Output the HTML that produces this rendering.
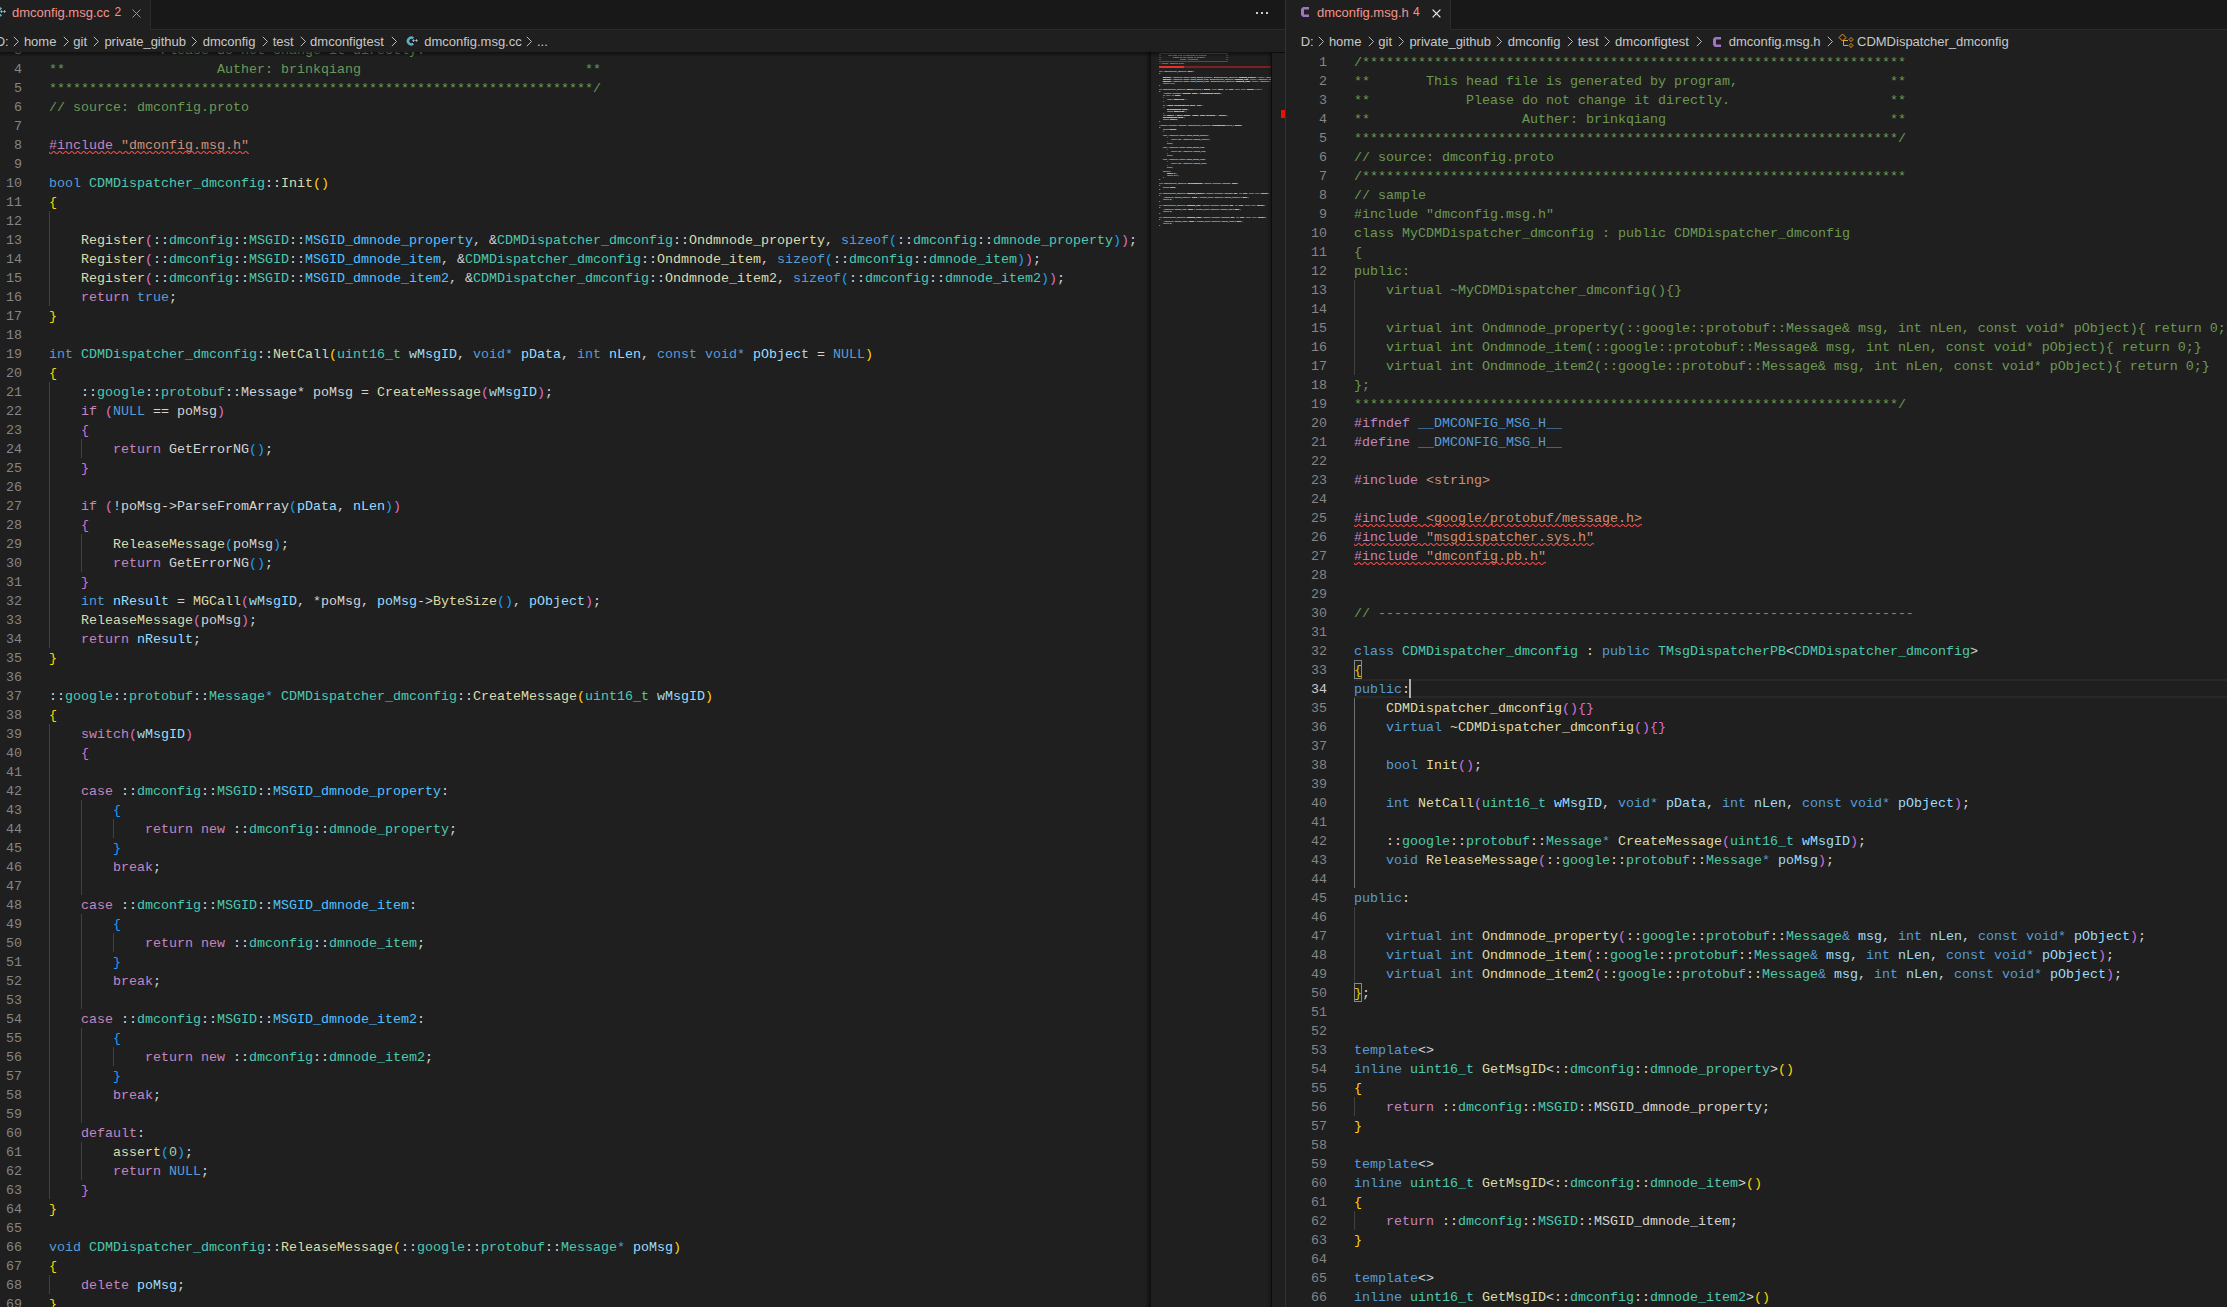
<!DOCTYPE html><html><head><meta charset="utf-8"><style>
*{margin:0;padding:0;box-sizing:border-box}
html,body{width:2227px;height:1307px;overflow:hidden;background:#1f1f1f}
body{position:relative;font-family:"Liberation Sans",sans-serif}
.cl,.ln{position:absolute;height:19px;line-height:19px;white-space:pre;font-family:"Liberation Mono",monospace;font-size:13.33px;color:#d4d4d4}
.ln{width:40px;text-align:right}
.ig{position:absolute;width:1px;height:19px}
.ui{position:absolute;white-space:pre;line-height:19px;font-family:"Liberation Sans",sans-serif}
svg{overflow:visible}
</style></head><body>
<svg width="0" height="0" style="position:absolute"><defs><pattern id="sq" patternUnits="userSpaceOnUse" width="6" height="3"><g fill="#f14c4c"><polygon points="5.5,0 2.5,3 1.1,3 4.1,0"/><polygon points="4,0 6,2 6,0.6 4.7,0"/><polygon points="0,2 1,3 2.4,3 0,0.6"/></g></pattern></defs></svg>
<div class="ln" style="top:22px;left:-18px;color:#858585">2</div>
<div class="cl" style="top:22px;left:49px"><span style="color:#6a9955">**       This head file is generated by program,                   **</span></div>
<div class="ln" style="top:41px;left:-18px;color:#858585">3</div>
<div class="cl" style="top:41px;left:49px"><span style="color:#6a9955">**            Please do not change it directly.                    **</span></div>
<div class="ln" style="top:60px;left:-18px;color:#858585">4</div>
<div class="cl" style="top:60px;left:49px"><span style="color:#6a9955">**                   Auther: brinkqiang                            **</span></div>
<div class="ln" style="top:79px;left:-18px;color:#858585">5</div>
<div class="cl" style="top:79px;left:49px"><span style="color:#6a9955">********************************************************************/</span></div>
<div class="ln" style="top:98px;left:-18px;color:#858585">6</div>
<div class="cl" style="top:98px;left:49px"><span style="color:#6a9955">// source: dmconfig.proto</span></div>
<div class="ln" style="top:117px;left:-18px;color:#858585">7</div>
<div class="ln" style="top:136px;left:-18px;color:#858585">8</div>
<div class="cl" style="top:136px;left:49px"><span style="color:#c586c0">#include</span> <span style="color:#ce9178">&quot;dmconfig.msg.h&quot;</span></div>
<div class="ln" style="top:155px;left:-18px;color:#858585">9</div>
<div class="ln" style="top:174px;left:-18px;color:#858585">10</div>
<div class="cl" style="top:174px;left:49px"><span style="color:#569cd6">bool</span> <span style="color:#4ec9b0">CDMDispatcher_dmconfig</span>::<span style="color:#dcdcaa">Init</span><span style="color:#ffd700">()</span></div>
<div class="ln" style="top:193px;left:-18px;color:#858585">11</div>
<div class="cl" style="top:193px;left:49px"><span style="color:#ffd700">{</span></div>
<div class="ln" style="top:212px;left:-18px;color:#858585">12</div>
<div class="ig" style="top:211px;left:49px;background:#404040"></div>
<div class="ln" style="top:231px;left:-18px;color:#858585">13</div>
<div class="ig" style="top:230px;left:49px;background:#404040"></div>
<div class="cl" style="top:231px;left:49px">    <span style="color:#dcdcaa">Register</span><span style="color:#da70d6">(</span>::<span style="color:#4ec9b0">dmconfig</span>::<span style="color:#4ec9b0">MSGID</span>::<span style="color:#4fc1ff">MSGID_dmnode_property</span>, &amp;<span style="color:#4ec9b0">CDMDispatcher_dmconfig</span>::<span style="color:#dcdcaa">Ondmnode_property</span>, <span style="color:#569cd6">sizeof</span><span style="color:#179fff">(</span>::<span style="color:#4ec9b0">dmconfig</span>::<span style="color:#4ec9b0">dmnode_property</span><span style="color:#179fff">)</span><span style="color:#da70d6">)</span>;</div>
<div class="ln" style="top:250px;left:-18px;color:#858585">14</div>
<div class="ig" style="top:249px;left:49px;background:#404040"></div>
<div class="cl" style="top:250px;left:49px">    <span style="color:#dcdcaa">Register</span><span style="color:#da70d6">(</span>::<span style="color:#4ec9b0">dmconfig</span>::<span style="color:#4ec9b0">MSGID</span>::<span style="color:#4fc1ff">MSGID_dmnode_item</span>, &amp;<span style="color:#4ec9b0">CDMDispatcher_dmconfig</span>::<span style="color:#dcdcaa">Ondmnode_item</span>, <span style="color:#569cd6">sizeof</span><span style="color:#179fff">(</span>::<span style="color:#4ec9b0">dmconfig</span>::<span style="color:#4ec9b0">dmnode_item</span><span style="color:#179fff">)</span><span style="color:#da70d6">)</span>;</div>
<div class="ln" style="top:269px;left:-18px;color:#858585">15</div>
<div class="ig" style="top:268px;left:49px;background:#404040"></div>
<div class="cl" style="top:269px;left:49px">    <span style="color:#dcdcaa">Register</span><span style="color:#da70d6">(</span>::<span style="color:#4ec9b0">dmconfig</span>::<span style="color:#4ec9b0">MSGID</span>::<span style="color:#4fc1ff">MSGID_dmnode_item2</span>, &amp;<span style="color:#4ec9b0">CDMDispatcher_dmconfig</span>::<span style="color:#dcdcaa">Ondmnode_item2</span>, <span style="color:#569cd6">sizeof</span><span style="color:#179fff">(</span>::<span style="color:#4ec9b0">dmconfig</span>::<span style="color:#4ec9b0">dmnode_item2</span><span style="color:#179fff">)</span><span style="color:#da70d6">)</span>;</div>
<div class="ln" style="top:288px;left:-18px;color:#858585">16</div>
<div class="ig" style="top:287px;left:49px;background:#404040"></div>
<div class="cl" style="top:288px;left:49px">    <span style="color:#c586c0">return</span> <span style="color:#569cd6">true</span>;</div>
<div class="ln" style="top:307px;left:-18px;color:#858585">17</div>
<div class="cl" style="top:307px;left:49px"><span style="color:#ffd700">}</span></div>
<div class="ln" style="top:326px;left:-18px;color:#858585">18</div>
<div class="ln" style="top:345px;left:-18px;color:#858585">19</div>
<div class="cl" style="top:345px;left:49px"><span style="color:#569cd6">int</span> <span style="color:#4ec9b0">CDMDispatcher_dmconfig</span>::<span style="color:#dcdcaa">NetCall</span><span style="color:#ffd700">(</span><span style="color:#4ec9b0">uint16_t</span> <span style="color:#9cdcfe">wMsgID</span>, <span style="color:#569cd6">void*</span> <span style="color:#9cdcfe">pData</span>, <span style="color:#569cd6">int</span> <span style="color:#9cdcfe">nLen</span>, <span style="color:#569cd6">const</span> <span style="color:#569cd6">void*</span> <span style="color:#9cdcfe">pObject</span> = <span style="color:#569cd6">NULL</span><span style="color:#ffd700">)</span></div>
<div class="ln" style="top:364px;left:-18px;color:#858585">20</div>
<div class="cl" style="top:364px;left:49px"><span style="color:#ffd700">{</span></div>
<div class="ln" style="top:383px;left:-18px;color:#858585">21</div>
<div class="ig" style="top:382px;left:49px;background:#404040"></div>
<div class="cl" style="top:383px;left:49px">    ::<span style="color:#4ec9b0">google</span>::<span style="color:#4ec9b0">protobuf</span>::Message* poMsg = <span style="color:#dcdcaa">CreateMessage</span><span style="color:#da70d6">(</span><span style="color:#9cdcfe">wMsgID</span><span style="color:#da70d6">)</span>;</div>
<div class="ln" style="top:402px;left:-18px;color:#858585">22</div>
<div class="ig" style="top:401px;left:49px;background:#404040"></div>
<div class="cl" style="top:402px;left:49px">    <span style="color:#c586c0">if</span> <span style="color:#da70d6">(</span><span style="color:#569cd6">NULL</span> == poMsg<span style="color:#da70d6">)</span></div>
<div class="ln" style="top:421px;left:-18px;color:#858585">23</div>
<div class="ig" style="top:420px;left:49px;background:#404040"></div>
<div class="cl" style="top:421px;left:49px">    <span style="color:#da70d6">{</span></div>
<div class="ln" style="top:440px;left:-18px;color:#858585">24</div>
<div class="ig" style="top:439px;left:49px;background:#404040"></div>
<div class="ig" style="top:439px;left:81px;background:#404040"></div>
<div class="cl" style="top:440px;left:49px">        <span style="color:#c586c0">return</span> GetErrorNG<span style="color:#179fff">()</span>;</div>
<div class="ln" style="top:459px;left:-18px;color:#858585">25</div>
<div class="ig" style="top:458px;left:49px;background:#404040"></div>
<div class="cl" style="top:459px;left:49px">    <span style="color:#da70d6">}</span></div>
<div class="ln" style="top:478px;left:-18px;color:#858585">26</div>
<div class="ig" style="top:477px;left:49px;background:#404040"></div>
<div class="ln" style="top:497px;left:-18px;color:#858585">27</div>
<div class="ig" style="top:496px;left:49px;background:#404040"></div>
<div class="cl" style="top:497px;left:49px">    <span style="color:#c586c0">if</span> <span style="color:#da70d6">(</span>!poMsg-&gt;ParseFromArray<span style="color:#179fff">(</span><span style="color:#9cdcfe">pData</span>, <span style="color:#9cdcfe">nLen</span><span style="color:#179fff">)</span><span style="color:#da70d6">)</span></div>
<div class="ln" style="top:516px;left:-18px;color:#858585">28</div>
<div class="ig" style="top:515px;left:49px;background:#404040"></div>
<div class="cl" style="top:516px;left:49px">    <span style="color:#da70d6">{</span></div>
<div class="ln" style="top:535px;left:-18px;color:#858585">29</div>
<div class="ig" style="top:534px;left:49px;background:#404040"></div>
<div class="ig" style="top:534px;left:81px;background:#404040"></div>
<div class="cl" style="top:535px;left:49px">        <span style="color:#dcdcaa">ReleaseMessage</span><span style="color:#179fff">(</span>poMsg<span style="color:#179fff">)</span>;</div>
<div class="ln" style="top:554px;left:-18px;color:#858585">30</div>
<div class="ig" style="top:553px;left:49px;background:#404040"></div>
<div class="ig" style="top:553px;left:81px;background:#404040"></div>
<div class="cl" style="top:554px;left:49px">        <span style="color:#c586c0">return</span> GetErrorNG<span style="color:#179fff">()</span>;</div>
<div class="ln" style="top:573px;left:-18px;color:#858585">31</div>
<div class="ig" style="top:572px;left:49px;background:#404040"></div>
<div class="cl" style="top:573px;left:49px">    <span style="color:#da70d6">}</span></div>
<div class="ln" style="top:592px;left:-18px;color:#858585">32</div>
<div class="ig" style="top:591px;left:49px;background:#404040"></div>
<div class="cl" style="top:592px;left:49px">    <span style="color:#569cd6">int</span> <span style="color:#9cdcfe">nResult</span> = <span style="color:#dcdcaa">MGCall</span><span style="color:#da70d6">(</span><span style="color:#9cdcfe">wMsgID</span>, *poMsg, <span style="color:#9cdcfe">poMsg</span>-&gt;<span style="color:#dcdcaa">ByteSize</span><span style="color:#179fff">()</span>, <span style="color:#9cdcfe">pObject</span><span style="color:#da70d6">)</span>;</div>
<div class="ln" style="top:611px;left:-18px;color:#858585">33</div>
<div class="ig" style="top:610px;left:49px;background:#404040"></div>
<div class="cl" style="top:611px;left:49px">    <span style="color:#dcdcaa">ReleaseMessage</span><span style="color:#da70d6">(</span>poMsg<span style="color:#da70d6">)</span>;</div>
<div class="ln" style="top:630px;left:-18px;color:#858585">34</div>
<div class="ig" style="top:629px;left:49px;background:#404040"></div>
<div class="cl" style="top:630px;left:49px">    <span style="color:#c586c0">return</span> <span style="color:#9cdcfe">nResult</span>;</div>
<div class="ln" style="top:649px;left:-18px;color:#858585">35</div>
<div class="cl" style="top:649px;left:49px"><span style="color:#ffd700">}</span></div>
<div class="ln" style="top:668px;left:-18px;color:#858585">36</div>
<div class="ln" style="top:687px;left:-18px;color:#858585">37</div>
<div class="cl" style="top:687px;left:49px">::<span style="color:#4ec9b0">google</span>::<span style="color:#4ec9b0">protobuf</span>::<span style="color:#4ec9b0">Message</span><span style="color:#569cd6">*</span> <span style="color:#4ec9b0">CDMDispatcher_dmconfig</span>::<span style="color:#dcdcaa">CreateMessage</span><span style="color:#ffd700">(</span><span style="color:#4ec9b0">uint16_t</span> <span style="color:#9cdcfe">wMsgID</span><span style="color:#ffd700">)</span></div>
<div class="ln" style="top:706px;left:-18px;color:#858585">38</div>
<div class="cl" style="top:706px;left:49px"><span style="color:#ffd700">{</span></div>
<div class="ln" style="top:725px;left:-18px;color:#858585">39</div>
<div class="ig" style="top:724px;left:49px;background:#404040"></div>
<div class="cl" style="top:725px;left:49px">    <span style="color:#c586c0">switch</span><span style="color:#da70d6">(</span><span style="color:#9cdcfe">wMsgID</span><span style="color:#da70d6">)</span></div>
<div class="ln" style="top:744px;left:-18px;color:#858585">40</div>
<div class="ig" style="top:743px;left:49px;background:#404040"></div>
<div class="cl" style="top:744px;left:49px">    <span style="color:#da70d6">{</span></div>
<div class="ln" style="top:763px;left:-18px;color:#858585">41</div>
<div class="ig" style="top:762px;left:49px;background:#404040"></div>
<div class="ln" style="top:782px;left:-18px;color:#858585">42</div>
<div class="ig" style="top:781px;left:49px;background:#404040"></div>
<div class="cl" style="top:782px;left:49px">    <span style="color:#c586c0">case</span> ::<span style="color:#4ec9b0">dmconfig</span>::<span style="color:#4ec9b0">MSGID</span>::<span style="color:#4fc1ff">MSGID_dmnode_property</span>:</div>
<div class="ln" style="top:801px;left:-18px;color:#858585">43</div>
<div class="ig" style="top:800px;left:49px;background:#404040"></div>
<div class="ig" style="top:800px;left:81px;background:#404040"></div>
<div class="cl" style="top:801px;left:49px">        <span style="color:#179fff">{</span></div>
<div class="ln" style="top:820px;left:-18px;color:#858585">44</div>
<div class="ig" style="top:819px;left:49px;background:#404040"></div>
<div class="ig" style="top:819px;left:81px;background:#404040"></div>
<div class="ig" style="top:819px;left:113px;background:#404040"></div>
<div class="cl" style="top:820px;left:49px">            <span style="color:#c586c0">return</span> <span style="color:#c586c0">new</span> ::<span style="color:#4ec9b0">dmconfig</span>::<span style="color:#4ec9b0">dmnode_property</span>;</div>
<div class="ln" style="top:839px;left:-18px;color:#858585">45</div>
<div class="ig" style="top:838px;left:49px;background:#404040"></div>
<div class="ig" style="top:838px;left:81px;background:#404040"></div>
<div class="cl" style="top:839px;left:49px">        <span style="color:#179fff">}</span></div>
<div class="ln" style="top:858px;left:-18px;color:#858585">46</div>
<div class="ig" style="top:857px;left:49px;background:#404040"></div>
<div class="ig" style="top:857px;left:81px;background:#404040"></div>
<div class="cl" style="top:858px;left:49px">        <span style="color:#c586c0">break</span>;</div>
<div class="ln" style="top:877px;left:-18px;color:#858585">47</div>
<div class="ig" style="top:876px;left:49px;background:#404040"></div>
<div class="ig" style="top:876px;left:81px;background:#404040"></div>
<div class="ln" style="top:896px;left:-18px;color:#858585">48</div>
<div class="ig" style="top:895px;left:49px;background:#404040"></div>
<div class="cl" style="top:896px;left:49px">    <span style="color:#c586c0">case</span> ::<span style="color:#4ec9b0">dmconfig</span>::<span style="color:#4ec9b0">MSGID</span>::<span style="color:#4fc1ff">MSGID_dmnode_item</span>:</div>
<div class="ln" style="top:915px;left:-18px;color:#858585">49</div>
<div class="ig" style="top:914px;left:49px;background:#404040"></div>
<div class="ig" style="top:914px;left:81px;background:#404040"></div>
<div class="cl" style="top:915px;left:49px">        <span style="color:#179fff">{</span></div>
<div class="ln" style="top:934px;left:-18px;color:#858585">50</div>
<div class="ig" style="top:933px;left:49px;background:#404040"></div>
<div class="ig" style="top:933px;left:81px;background:#404040"></div>
<div class="ig" style="top:933px;left:113px;background:#404040"></div>
<div class="cl" style="top:934px;left:49px">            <span style="color:#c586c0">return</span> <span style="color:#c586c0">new</span> ::<span style="color:#4ec9b0">dmconfig</span>::<span style="color:#4ec9b0">dmnode_item</span>;</div>
<div class="ln" style="top:953px;left:-18px;color:#858585">51</div>
<div class="ig" style="top:952px;left:49px;background:#404040"></div>
<div class="ig" style="top:952px;left:81px;background:#404040"></div>
<div class="cl" style="top:953px;left:49px">        <span style="color:#179fff">}</span></div>
<div class="ln" style="top:972px;left:-18px;color:#858585">52</div>
<div class="ig" style="top:971px;left:49px;background:#404040"></div>
<div class="ig" style="top:971px;left:81px;background:#404040"></div>
<div class="cl" style="top:972px;left:49px">        <span style="color:#c586c0">break</span>;</div>
<div class="ln" style="top:991px;left:-18px;color:#858585">53</div>
<div class="ig" style="top:990px;left:49px;background:#404040"></div>
<div class="ig" style="top:990px;left:81px;background:#404040"></div>
<div class="ln" style="top:1010px;left:-18px;color:#858585">54</div>
<div class="ig" style="top:1009px;left:49px;background:#404040"></div>
<div class="cl" style="top:1010px;left:49px">    <span style="color:#c586c0">case</span> ::<span style="color:#4ec9b0">dmconfig</span>::<span style="color:#4ec9b0">MSGID</span>::<span style="color:#4fc1ff">MSGID_dmnode_item2</span>:</div>
<div class="ln" style="top:1029px;left:-18px;color:#858585">55</div>
<div class="ig" style="top:1028px;left:49px;background:#404040"></div>
<div class="ig" style="top:1028px;left:81px;background:#404040"></div>
<div class="cl" style="top:1029px;left:49px">        <span style="color:#179fff">{</span></div>
<div class="ln" style="top:1048px;left:-18px;color:#858585">56</div>
<div class="ig" style="top:1047px;left:49px;background:#404040"></div>
<div class="ig" style="top:1047px;left:81px;background:#404040"></div>
<div class="ig" style="top:1047px;left:113px;background:#404040"></div>
<div class="cl" style="top:1048px;left:49px">            <span style="color:#c586c0">return</span> <span style="color:#c586c0">new</span> ::<span style="color:#4ec9b0">dmconfig</span>::<span style="color:#4ec9b0">dmnode_item2</span>;</div>
<div class="ln" style="top:1067px;left:-18px;color:#858585">57</div>
<div class="ig" style="top:1066px;left:49px;background:#404040"></div>
<div class="ig" style="top:1066px;left:81px;background:#404040"></div>
<div class="cl" style="top:1067px;left:49px">        <span style="color:#179fff">}</span></div>
<div class="ln" style="top:1086px;left:-18px;color:#858585">58</div>
<div class="ig" style="top:1085px;left:49px;background:#404040"></div>
<div class="ig" style="top:1085px;left:81px;background:#404040"></div>
<div class="cl" style="top:1086px;left:49px">        <span style="color:#c586c0">break</span>;</div>
<div class="ln" style="top:1105px;left:-18px;color:#858585">59</div>
<div class="ig" style="top:1104px;left:49px;background:#404040"></div>
<div class="ig" style="top:1104px;left:81px;background:#404040"></div>
<div class="ln" style="top:1124px;left:-18px;color:#858585">60</div>
<div class="ig" style="top:1123px;left:49px;background:#404040"></div>
<div class="cl" style="top:1124px;left:49px">    <span style="color:#c586c0">default</span>:</div>
<div class="ln" style="top:1143px;left:-18px;color:#858585">61</div>
<div class="ig" style="top:1142px;left:49px;background:#404040"></div>
<div class="ig" style="top:1142px;left:81px;background:#404040"></div>
<div class="cl" style="top:1143px;left:49px">        <span style="color:#dcdcaa">assert</span><span style="color:#179fff">(</span><span style="color:#b5cea8">0</span><span style="color:#179fff">)</span>;</div>
<div class="ln" style="top:1162px;left:-18px;color:#858585">62</div>
<div class="ig" style="top:1161px;left:49px;background:#404040"></div>
<div class="ig" style="top:1161px;left:81px;background:#404040"></div>
<div class="cl" style="top:1162px;left:49px">        <span style="color:#c586c0">return</span> <span style="color:#569cd6">NULL</span>;</div>
<div class="ln" style="top:1181px;left:-18px;color:#858585">63</div>
<div class="ig" style="top:1180px;left:49px;background:#404040"></div>
<div class="cl" style="top:1181px;left:49px">    <span style="color:#da70d6">}</span></div>
<div class="ln" style="top:1200px;left:-18px;color:#858585">64</div>
<div class="cl" style="top:1200px;left:49px"><span style="color:#ffd700">}</span></div>
<div class="ln" style="top:1219px;left:-18px;color:#858585">65</div>
<div class="ln" style="top:1238px;left:-18px;color:#858585">66</div>
<div class="cl" style="top:1238px;left:49px"><span style="color:#569cd6">void</span> <span style="color:#4ec9b0">CDMDispatcher_dmconfig</span>::<span style="color:#dcdcaa">ReleaseMessage</span><span style="color:#ffd700">(</span>::<span style="color:#4ec9b0">google</span>::<span style="color:#4ec9b0">protobuf</span>::<span style="color:#4ec9b0">Message</span><span style="color:#569cd6">*</span> <span style="color:#9cdcfe">poMsg</span><span style="color:#ffd700">)</span></div>
<div class="ln" style="top:1257px;left:-18px;color:#858585">67</div>
<div class="cl" style="top:1257px;left:49px"><span style="color:#ffd700">{</span></div>
<div class="ln" style="top:1276px;left:-18px;color:#858585">68</div>
<div class="ig" style="top:1275px;left:49px;background:#404040"></div>
<div class="cl" style="top:1276px;left:49px">    <span style="color:#c586c0">delete</span> <span style="color:#9cdcfe">poMsg</span>;</div>
<div class="ln" style="top:1295px;left:-18px;color:#858585">69</div>
<div class="cl" style="top:1295px;left:49px"><span style="color:#ffd700">}</span></div>
<div style="position:absolute;left:1354px;top:679px;width:873px;height:19px;border-top:2px solid #282828;border-bottom:2px solid #282828"></div>
<div class="ln" style="top:53px;left:1287px;color:#858585">1</div>
<div class="cl" style="top:53px;left:1354px"><span style="color:#6a9955">/********************************************************************</span></div>
<div class="ln" style="top:72px;left:1287px;color:#858585">2</div>
<div class="cl" style="top:72px;left:1354px"><span style="color:#6a9955">**       This head file is generated by program,                   **</span></div>
<div class="ln" style="top:91px;left:1287px;color:#858585">3</div>
<div class="cl" style="top:91px;left:1354px"><span style="color:#6a9955">**            Please do not change it directly.                    **</span></div>
<div class="ln" style="top:110px;left:1287px;color:#858585">4</div>
<div class="cl" style="top:110px;left:1354px"><span style="color:#6a9955">**                   Auther: brinkqiang                            **</span></div>
<div class="ln" style="top:129px;left:1287px;color:#858585">5</div>
<div class="cl" style="top:129px;left:1354px"><span style="color:#6a9955">********************************************************************/</span></div>
<div class="ln" style="top:148px;left:1287px;color:#858585">6</div>
<div class="cl" style="top:148px;left:1354px"><span style="color:#6a9955">// source: dmconfig.proto</span></div>
<div class="ln" style="top:167px;left:1287px;color:#858585">7</div>
<div class="cl" style="top:167px;left:1354px"><span style="color:#6a9955">/********************************************************************</span></div>
<div class="ln" style="top:186px;left:1287px;color:#858585">8</div>
<div class="cl" style="top:186px;left:1354px"><span style="color:#6a9955">// sample</span></div>
<div class="ln" style="top:205px;left:1287px;color:#858585">9</div>
<div class="cl" style="top:205px;left:1354px"><span style="color:#6a9955">#include &quot;dmconfig.msg.h&quot;</span></div>
<div class="ln" style="top:224px;left:1287px;color:#858585">10</div>
<div class="cl" style="top:224px;left:1354px"><span style="color:#6a9955">class MyCDMDispatcher_dmconfig : public CDMDispatcher_dmconfig</span></div>
<div class="ln" style="top:243px;left:1287px;color:#858585">11</div>
<div class="cl" style="top:243px;left:1354px"><span style="color:#6a9955">{</span></div>
<div class="ln" style="top:262px;left:1287px;color:#858585">12</div>
<div class="cl" style="top:262px;left:1354px"><span style="color:#6a9955">public:</span></div>
<div class="ln" style="top:281px;left:1287px;color:#858585">13</div>
<div class="ig" style="top:280px;left:1354px;background:#404040"></div>
<div class="cl" style="top:281px;left:1354px"><span style="color:#6a9955">    virtual ~MyCDMDispatcher_dmconfig(){}</span></div>
<div class="ln" style="top:300px;left:1287px;color:#858585">14</div>
<div class="ig" style="top:299px;left:1354px;background:#404040"></div>
<div class="ln" style="top:319px;left:1287px;color:#858585">15</div>
<div class="ig" style="top:318px;left:1354px;background:#404040"></div>
<div class="cl" style="top:319px;left:1354px"><span style="color:#6a9955">    virtual int Ondmnode_property(::google::protobuf::Message&amp; msg, int nLen, const void* pObject){ return 0;}</span></div>
<div class="ln" style="top:338px;left:1287px;color:#858585">16</div>
<div class="ig" style="top:337px;left:1354px;background:#404040"></div>
<div class="cl" style="top:338px;left:1354px"><span style="color:#6a9955">    virtual int Ondmnode_item(::google::protobuf::Message&amp; msg, int nLen, const void* pObject){ return 0;}</span></div>
<div class="ln" style="top:357px;left:1287px;color:#858585">17</div>
<div class="ig" style="top:356px;left:1354px;background:#404040"></div>
<div class="cl" style="top:357px;left:1354px"><span style="color:#6a9955">    virtual int Ondmnode_item2(::google::protobuf::Message&amp; msg, int nLen, const void* pObject){ return 0;}</span></div>
<div class="ln" style="top:376px;left:1287px;color:#858585">18</div>
<div class="cl" style="top:376px;left:1354px"><span style="color:#6a9955">};</span></div>
<div class="ln" style="top:395px;left:1287px;color:#858585">19</div>
<div class="cl" style="top:395px;left:1354px"><span style="color:#6a9955">********************************************************************/</span></div>
<div class="ln" style="top:414px;left:1287px;color:#858585">20</div>
<div class="cl" style="top:414px;left:1354px"><span style="color:#c586c0">#ifndef</span> <span style="color:#569cd6">__DMCONFIG_MSG_H__</span></div>
<div class="ln" style="top:433px;left:1287px;color:#858585">21</div>
<div class="cl" style="top:433px;left:1354px"><span style="color:#c586c0">#define</span> <span style="color:#569cd6">__DMCONFIG_MSG_H__</span></div>
<div class="ln" style="top:452px;left:1287px;color:#858585">22</div>
<div class="ln" style="top:471px;left:1287px;color:#858585">23</div>
<div class="cl" style="top:471px;left:1354px"><span style="color:#c586c0">#include</span> <span style="color:#ce9178">&lt;string&gt;</span></div>
<div class="ln" style="top:490px;left:1287px;color:#858585">24</div>
<div class="ln" style="top:509px;left:1287px;color:#858585">25</div>
<div class="cl" style="top:509px;left:1354px"><span style="color:#c586c0">#include</span> <span style="color:#ce9178">&lt;google/protobuf/message.h&gt;</span></div>
<div class="ln" style="top:528px;left:1287px;color:#858585">26</div>
<div class="cl" style="top:528px;left:1354px"><span style="color:#c586c0">#include</span> <span style="color:#ce9178">&quot;msgdispatcher.sys.h&quot;</span></div>
<div class="ln" style="top:547px;left:1287px;color:#858585">27</div>
<div class="cl" style="top:547px;left:1354px"><span style="color:#c586c0">#include</span> <span style="color:#ce9178">&quot;dmconfig.pb.h&quot;</span></div>
<div class="ln" style="top:566px;left:1287px;color:#858585">28</div>
<div class="ln" style="top:585px;left:1287px;color:#858585">29</div>
<div class="ln" style="top:604px;left:1287px;color:#858585">30</div>
<div class="cl" style="top:604px;left:1354px"><span style="color:#6a9955">// -------------------------------------------------------------------</span></div>
<div class="ln" style="top:623px;left:1287px;color:#858585">31</div>
<div class="ln" style="top:642px;left:1287px;color:#858585">32</div>
<div class="cl" style="top:642px;left:1354px"><span style="color:#569cd6">class</span> <span style="color:#4ec9b0">CDMDispatcher_dmconfig</span> : <span style="color:#569cd6">public</span> <span style="color:#4ec9b0">TMsgDispatcherPB</span>&lt;<span style="color:#4ec9b0">CDMDispatcher_dmconfig</span>&gt;</div>
<div class="ln" style="top:661px;left:1287px;color:#858585">33</div>
<div class="cl" style="top:661px;left:1354px"><span style="color:#ffd700">{</span></div>
<div class="ln" style="top:680px;left:1287px;color:#cccccc">34</div>
<div class="cl" style="top:680px;left:1354px"><span style="color:#569cd6">public</span>:</div>
<div class="ln" style="top:699px;left:1287px;color:#858585">35</div>
<div class="ig" style="top:698px;left:1354px;background:#707070"></div>
<div class="cl" style="top:699px;left:1354px">    <span style="color:#dcdcaa">CDMDispatcher_dmconfig</span><span style="color:#da70d6">(){}</span></div>
<div class="ln" style="top:718px;left:1287px;color:#858585">36</div>
<div class="ig" style="top:717px;left:1354px;background:#707070"></div>
<div class="cl" style="top:718px;left:1354px">    <span style="color:#569cd6">virtual</span> <span style="color:#dcdcaa">~CDMDispatcher_dmconfig</span><span style="color:#da70d6">(){}</span></div>
<div class="ln" style="top:737px;left:1287px;color:#858585">37</div>
<div class="ig" style="top:736px;left:1354px;background:#707070"></div>
<div class="ln" style="top:756px;left:1287px;color:#858585">38</div>
<div class="ig" style="top:755px;left:1354px;background:#707070"></div>
<div class="cl" style="top:756px;left:1354px">    <span style="color:#569cd6">bool</span> <span style="color:#dcdcaa">Init</span><span style="color:#da70d6">()</span>;</div>
<div class="ln" style="top:775px;left:1287px;color:#858585">39</div>
<div class="ig" style="top:774px;left:1354px;background:#707070"></div>
<div class="ln" style="top:794px;left:1287px;color:#858585">40</div>
<div class="ig" style="top:793px;left:1354px;background:#707070"></div>
<div class="cl" style="top:794px;left:1354px">    <span style="color:#569cd6">int</span> <span style="color:#dcdcaa">NetCall</span><span style="color:#da70d6">(</span><span style="color:#4ec9b0">uint16_t</span> <span style="color:#9cdcfe">wMsgID</span>, <span style="color:#569cd6">void*</span> <span style="color:#9cdcfe">pData</span>, <span style="color:#569cd6">int</span> <span style="color:#9cdcfe">nLen</span>, <span style="color:#569cd6">const</span> <span style="color:#569cd6">void*</span> <span style="color:#9cdcfe">pObject</span><span style="color:#da70d6">)</span>;</div>
<div class="ln" style="top:813px;left:1287px;color:#858585">41</div>
<div class="ig" style="top:812px;left:1354px;background:#707070"></div>
<div class="ln" style="top:832px;left:1287px;color:#858585">42</div>
<div class="ig" style="top:831px;left:1354px;background:#707070"></div>
<div class="cl" style="top:832px;left:1354px">    ::<span style="color:#4ec9b0">google</span>::<span style="color:#4ec9b0">protobuf</span>::<span style="color:#4ec9b0">Message</span><span style="color:#569cd6">*</span> <span style="color:#dcdcaa">CreateMessage</span><span style="color:#da70d6">(</span><span style="color:#4ec9b0">uint16_t</span> <span style="color:#9cdcfe">wMsgID</span><span style="color:#da70d6">)</span>;</div>
<div class="ln" style="top:851px;left:1287px;color:#858585">43</div>
<div class="ig" style="top:850px;left:1354px;background:#707070"></div>
<div class="cl" style="top:851px;left:1354px">    <span style="color:#569cd6">void</span> <span style="color:#dcdcaa">ReleaseMessage</span><span style="color:#da70d6">(</span>::<span style="color:#4ec9b0">google</span>::<span style="color:#4ec9b0">protobuf</span>::<span style="color:#4ec9b0">Message</span><span style="color:#569cd6">*</span> <span style="color:#9cdcfe">poMsg</span><span style="color:#da70d6">)</span>;</div>
<div class="ln" style="top:870px;left:1287px;color:#858585">44</div>
<div class="ig" style="top:869px;left:1354px;background:#707070"></div>
<div class="ln" style="top:889px;left:1287px;color:#858585">45</div>
<div class="cl" style="top:889px;left:1354px"><span style="color:#569cd6">public</span>:</div>
<div class="ln" style="top:908px;left:1287px;color:#858585">46</div>
<div class="ig" style="top:907px;left:1354px;background:#404040"></div>
<div class="ln" style="top:927px;left:1287px;color:#858585">47</div>
<div class="ig" style="top:926px;left:1354px;background:#404040"></div>
<div class="cl" style="top:927px;left:1354px">    <span style="color:#569cd6">virtual</span> <span style="color:#569cd6">int</span> <span style="color:#dcdcaa">Ondmnode_property</span><span style="color:#da70d6">(</span>::<span style="color:#4ec9b0">google</span>::<span style="color:#4ec9b0">protobuf</span>::<span style="color:#4ec9b0">Message</span><span style="color:#569cd6">&amp;</span> <span style="color:#9cdcfe">msg</span>, <span style="color:#569cd6">int</span> <span style="color:#9cdcfe">nLen</span>, <span style="color:#569cd6">const</span> <span style="color:#569cd6">void*</span> <span style="color:#9cdcfe">pObject</span><span style="color:#da70d6">)</span>;</div>
<div class="ln" style="top:946px;left:1287px;color:#858585">48</div>
<div class="ig" style="top:945px;left:1354px;background:#404040"></div>
<div class="cl" style="top:946px;left:1354px">    <span style="color:#569cd6">virtual</span> <span style="color:#569cd6">int</span> <span style="color:#dcdcaa">Ondmnode_item</span><span style="color:#da70d6">(</span>::<span style="color:#4ec9b0">google</span>::<span style="color:#4ec9b0">protobuf</span>::<span style="color:#4ec9b0">Message</span><span style="color:#569cd6">&amp;</span> <span style="color:#9cdcfe">msg</span>, <span style="color:#569cd6">int</span> <span style="color:#9cdcfe">nLen</span>, <span style="color:#569cd6">const</span> <span style="color:#569cd6">void*</span> <span style="color:#9cdcfe">pObject</span><span style="color:#da70d6">)</span>;</div>
<div class="ln" style="top:965px;left:1287px;color:#858585">49</div>
<div class="ig" style="top:964px;left:1354px;background:#404040"></div>
<div class="cl" style="top:965px;left:1354px">    <span style="color:#569cd6">virtual</span> <span style="color:#569cd6">int</span> <span style="color:#dcdcaa">Ondmnode_item2</span><span style="color:#da70d6">(</span>::<span style="color:#4ec9b0">google</span>::<span style="color:#4ec9b0">protobuf</span>::<span style="color:#4ec9b0">Message</span><span style="color:#569cd6">&amp;</span> <span style="color:#9cdcfe">msg</span>, <span style="color:#569cd6">int</span> <span style="color:#9cdcfe">nLen</span>, <span style="color:#569cd6">const</span> <span style="color:#569cd6">void*</span> <span style="color:#9cdcfe">pObject</span><span style="color:#da70d6">)</span>;</div>
<div class="ln" style="top:984px;left:1287px;color:#858585">50</div>
<div class="cl" style="top:984px;left:1354px"><span style="color:#ffd700">}</span>;</div>
<div class="ln" style="top:1003px;left:1287px;color:#858585">51</div>
<div class="ln" style="top:1022px;left:1287px;color:#858585">52</div>
<div class="ln" style="top:1041px;left:1287px;color:#858585">53</div>
<div class="cl" style="top:1041px;left:1354px"><span style="color:#569cd6">template</span>&lt;&gt;</div>
<div class="ln" style="top:1060px;left:1287px;color:#858585">54</div>
<div class="cl" style="top:1060px;left:1354px"><span style="color:#569cd6">inline</span> <span style="color:#4ec9b0">uint16_t</span> <span style="color:#dcdcaa">GetMsgID</span>&lt;::<span style="color:#4ec9b0">dmconfig</span>::<span style="color:#4ec9b0">dmnode_property</span>&gt;<span style="color:#ffd700">()</span></div>
<div class="ln" style="top:1079px;left:1287px;color:#858585">55</div>
<div class="cl" style="top:1079px;left:1354px"><span style="color:#ffd700">{</span></div>
<div class="ln" style="top:1098px;left:1287px;color:#858585">56</div>
<div class="ig" style="top:1097px;left:1354px;background:#404040"></div>
<div class="cl" style="top:1098px;left:1354px">    <span style="color:#c586c0">return</span> ::<span style="color:#4ec9b0">dmconfig</span>::<span style="color:#4ec9b0">MSGID</span>::MSGID_dmnode_property;</div>
<div class="ln" style="top:1117px;left:1287px;color:#858585">57</div>
<div class="cl" style="top:1117px;left:1354px"><span style="color:#ffd700">}</span></div>
<div class="ln" style="top:1136px;left:1287px;color:#858585">58</div>
<div class="ln" style="top:1155px;left:1287px;color:#858585">59</div>
<div class="cl" style="top:1155px;left:1354px"><span style="color:#569cd6">template</span>&lt;&gt;</div>
<div class="ln" style="top:1174px;left:1287px;color:#858585">60</div>
<div class="cl" style="top:1174px;left:1354px"><span style="color:#569cd6">inline</span> <span style="color:#4ec9b0">uint16_t</span> <span style="color:#dcdcaa">GetMsgID</span>&lt;::<span style="color:#4ec9b0">dmconfig</span>::<span style="color:#4ec9b0">dmnode_item</span>&gt;<span style="color:#ffd700">()</span></div>
<div class="ln" style="top:1193px;left:1287px;color:#858585">61</div>
<div class="cl" style="top:1193px;left:1354px"><span style="color:#ffd700">{</span></div>
<div class="ln" style="top:1212px;left:1287px;color:#858585">62</div>
<div class="ig" style="top:1211px;left:1354px;background:#404040"></div>
<div class="cl" style="top:1212px;left:1354px">    <span style="color:#c586c0">return</span> ::<span style="color:#4ec9b0">dmconfig</span>::<span style="color:#4ec9b0">MSGID</span>::MSGID_dmnode_item;</div>
<div class="ln" style="top:1231px;left:1287px;color:#858585">63</div>
<div class="cl" style="top:1231px;left:1354px"><span style="color:#ffd700">}</span></div>
<div class="ln" style="top:1250px;left:1287px;color:#858585">64</div>
<div class="ln" style="top:1269px;left:1287px;color:#858585">65</div>
<div class="cl" style="top:1269px;left:1354px"><span style="color:#569cd6">template</span>&lt;&gt;</div>
<div class="ln" style="top:1288px;left:1287px;color:#858585">66</div>
<div class="cl" style="top:1288px;left:1354px"><span style="color:#569cd6">inline</span> <span style="color:#4ec9b0">uint16_t</span> <span style="color:#dcdcaa">GetMsgID</span>&lt;::<span style="color:#4ec9b0">dmconfig</span>::<span style="color:#4ec9b0">dmnode_item2</span>&gt;<span style="color:#ffd700">()</span></div>
<div class="ln" style="top:1307px;left:1287px;color:#858585">67</div>
<div class="cl" style="top:1307px;left:1354px"><span style="color:#ffd700">{</span></div>
<div style="position:absolute;left:1354px;top:660px;width:8px;height:19px;border:1px solid #888;background:rgba(0,100,0,0.1)"></div>
<div style="position:absolute;left:1354px;top:983px;width:8px;height:19px;border:1px solid #888;background:rgba(0,100,0,0.1)"></div>
<div style="position:absolute;left:1409px;top:679px;width:2px;height:19px;background:#aeafad"></div>
<svg style="position:absolute;left:49px;top:151px" width="200" height="3"><rect width="200" height="3" fill="url(#sq)"/></svg>
<svg style="position:absolute;left:1354px;top:524px" width="288" height="3"><rect width="288" height="3" fill="url(#sq)"/></svg>
<svg style="position:absolute;left:1354px;top:543px" width="240" height="3"><rect width="240" height="3" fill="url(#sq)"/></svg>
<svg style="position:absolute;left:1354px;top:562px" width="192" height="3"><rect width="192" height="3" fill="url(#sq)"/></svg>
<div style="position:absolute;left:1159px;top:52px;width:224px;height:360px;overflow:hidden;font-family:'Liberation Mono';font-size:3.333px;line-height:4px;white-space:pre;color:#d4d4d4;transform:scale(0.5);transform-origin:0 0;-webkit-text-stroke:0.3px currentColor"><span style="color:#6a9955">/********************************************************************</span>
<span style="color:#6a9955">**       This head file is generated by program,                   **</span>
<span style="color:#6a9955">**            Please do not change it directly.                    **</span>
<span style="color:#6a9955">**                   Auther: brinkqiang                            **</span>
<span style="color:#6a9955">********************************************************************/</span>
<span style="color:#6a9955">// source: dmconfig.proto</span>

<span style="color:#c586c0">#include</span> <span style="color:#ce9178">&quot;dmconfig.msg.h&quot;</span>

<span style="color:#569cd6">bool</span> <span style="color:#4ec9b0">CDMDispatcher_dmconfig</span>::<span style="color:#dcdcaa">Init</span><span style="color:#ffd700">()</span>
<span style="color:#ffd700">{</span>

    <span style="color:#dcdcaa">Register</span><span style="color:#da70d6">(</span>::<span style="color:#4ec9b0">dmconfig</span>::<span style="color:#4ec9b0">MSGID</span>::<span style="color:#4fc1ff">MSGID_dmnode_property</span>, &amp;<span style="color:#4ec9b0">CDMDispatcher_dmconfig</span>::<span style="color:#dcdcaa">Ondmnode_property</span>, <span style="color:#569cd6">sizeof</span><span style="color:#179fff">(</span>::<span style="color:#4ec9b0">dmconfig</span>::<span style="color:#4ec9b0">dmnode_property</span><span style="color:#179fff">)</span><span style="color:#da70d6">)</span>;
    <span style="color:#dcdcaa">Register</span><span style="color:#da70d6">(</span>::<span style="color:#4ec9b0">dmconfig</span>::<span style="color:#4ec9b0">MSGID</span>::<span style="color:#4fc1ff">MSGID_dmnode_item</span>, &amp;<span style="color:#4ec9b0">CDMDispatcher_dmconfig</span>::<span style="color:#dcdcaa">Ondmnode_item</span>, <span style="color:#569cd6">sizeof</span><span style="color:#179fff">(</span>::<span style="color:#4ec9b0">dmconfig</span>::<span style="color:#4ec9b0">dmnode_item</span><span style="color:#179fff">)</span><span style="color:#da70d6">)</span>;
    <span style="color:#dcdcaa">Register</span><span style="color:#da70d6">(</span>::<span style="color:#4ec9b0">dmconfig</span>::<span style="color:#4ec9b0">MSGID</span>::<span style="color:#4fc1ff">MSGID_dmnode_item2</span>, &amp;<span style="color:#4ec9b0">CDMDispatcher_dmconfig</span>::<span style="color:#dcdcaa">Ondmnode_item2</span>, <span style="color:#569cd6">sizeof</span><span style="color:#179fff">(</span>::<span style="color:#4ec9b0">dmconfig</span>::<span style="color:#4ec9b0">dmnode_item2</span><span style="color:#179fff">)</span><span style="color:#da70d6">)</span>;
    <span style="color:#c586c0">return</span> <span style="color:#569cd6">true</span>;
<span style="color:#ffd700">}</span>

<span style="color:#569cd6">int</span> <span style="color:#4ec9b0">CDMDispatcher_dmconfig</span>::<span style="color:#dcdcaa">NetCall</span><span style="color:#ffd700">(</span><span style="color:#4ec9b0">uint16_t</span> <span style="color:#9cdcfe">wMsgID</span>, <span style="color:#569cd6">void*</span> <span style="color:#9cdcfe">pData</span>, <span style="color:#569cd6">int</span> <span style="color:#9cdcfe">nLen</span>, <span style="color:#569cd6">const</span> <span style="color:#569cd6">void*</span> <span style="color:#9cdcfe">pObject</span> = <span style="color:#569cd6">NULL</span><span style="color:#ffd700">)</span>
<span style="color:#ffd700">{</span>
    ::<span style="color:#4ec9b0">google</span>::<span style="color:#4ec9b0">protobuf</span>::Message* poMsg = <span style="color:#dcdcaa">CreateMessage</span><span style="color:#da70d6">(</span><span style="color:#9cdcfe">wMsgID</span><span style="color:#da70d6">)</span>;
    <span style="color:#c586c0">if</span> <span style="color:#da70d6">(</span><span style="color:#569cd6">NULL</span> == poMsg<span style="color:#da70d6">)</span>
    <span style="color:#da70d6">{</span>
        <span style="color:#c586c0">return</span> GetErrorNG<span style="color:#179fff">()</span>;
    <span style="color:#da70d6">}</span>

    <span style="color:#c586c0">if</span> <span style="color:#da70d6">(</span>!poMsg-&gt;ParseFromArray<span style="color:#179fff">(</span><span style="color:#9cdcfe">pData</span>, <span style="color:#9cdcfe">nLen</span><span style="color:#179fff">)</span><span style="color:#da70d6">)</span>
    <span style="color:#da70d6">{</span>
        <span style="color:#dcdcaa">ReleaseMessage</span><span style="color:#179fff">(</span>poMsg<span style="color:#179fff">)</span>;
        <span style="color:#c586c0">return</span> GetErrorNG<span style="color:#179fff">()</span>;
    <span style="color:#da70d6">}</span>
    <span style="color:#569cd6">int</span> <span style="color:#9cdcfe">nResult</span> = <span style="color:#dcdcaa">MGCall</span><span style="color:#da70d6">(</span><span style="color:#9cdcfe">wMsgID</span>, *poMsg, <span style="color:#9cdcfe">poMsg</span>-&gt;<span style="color:#dcdcaa">ByteSize</span><span style="color:#179fff">()</span>, <span style="color:#9cdcfe">pObject</span><span style="color:#da70d6">)</span>;
    <span style="color:#dcdcaa">ReleaseMessage</span><span style="color:#da70d6">(</span>poMsg<span style="color:#da70d6">)</span>;
    <span style="color:#c586c0">return</span> <span style="color:#9cdcfe">nResult</span>;
<span style="color:#ffd700">}</span>

::<span style="color:#4ec9b0">google</span>::<span style="color:#4ec9b0">protobuf</span>::<span style="color:#4ec9b0">Message</span><span style="color:#569cd6">*</span> <span style="color:#4ec9b0">CDMDispatcher_dmconfig</span>::<span style="color:#dcdcaa">CreateMessage</span><span style="color:#ffd700">(</span><span style="color:#4ec9b0">uint16_t</span> <span style="color:#9cdcfe">wMsgID</span><span style="color:#ffd700">)</span>
<span style="color:#ffd700">{</span>
    <span style="color:#c586c0">switch</span><span style="color:#da70d6">(</span><span style="color:#9cdcfe">wMsgID</span><span style="color:#da70d6">)</span>
    <span style="color:#da70d6">{</span>

    <span style="color:#c586c0">case</span> ::<span style="color:#4ec9b0">dmconfig</span>::<span style="color:#4ec9b0">MSGID</span>::<span style="color:#4fc1ff">MSGID_dmnode_property</span>:
        <span style="color:#179fff">{</span>
            <span style="color:#c586c0">return</span> <span style="color:#c586c0">new</span> ::<span style="color:#4ec9b0">dmconfig</span>::<span style="color:#4ec9b0">dmnode_property</span>;
        <span style="color:#179fff">}</span>
        <span style="color:#c586c0">break</span>;

    <span style="color:#c586c0">case</span> ::<span style="color:#4ec9b0">dmconfig</span>::<span style="color:#4ec9b0">MSGID</span>::<span style="color:#4fc1ff">MSGID_dmnode_item</span>:
        <span style="color:#179fff">{</span>
            <span style="color:#c586c0">return</span> <span style="color:#c586c0">new</span> ::<span style="color:#4ec9b0">dmconfig</span>::<span style="color:#4ec9b0">dmnode_item</span>;
        <span style="color:#179fff">}</span>
        <span style="color:#c586c0">break</span>;

    <span style="color:#c586c0">case</span> ::<span style="color:#4ec9b0">dmconfig</span>::<span style="color:#4ec9b0">MSGID</span>::<span style="color:#4fc1ff">MSGID_dmnode_item2</span>:
        <span style="color:#179fff">{</span>
            <span style="color:#c586c0">return</span> <span style="color:#c586c0">new</span> ::<span style="color:#4ec9b0">dmconfig</span>::<span style="color:#4ec9b0">dmnode_item2</span>;
        <span style="color:#179fff">}</span>
        <span style="color:#c586c0">break</span>;

    <span style="color:#c586c0">default</span>:
        <span style="color:#dcdcaa">assert</span><span style="color:#179fff">(</span><span style="color:#b5cea8">0</span><span style="color:#179fff">)</span>;
        <span style="color:#c586c0">return</span> <span style="color:#569cd6">NULL</span>;
    <span style="color:#da70d6">}</span>
<span style="color:#ffd700">}</span>

<span style="color:#569cd6">void</span> <span style="color:#4ec9b0">CDMDispatcher_dmconfig</span>::<span style="color:#dcdcaa">ReleaseMessage</span><span style="color:#ffd700">(</span>::<span style="color:#4ec9b0">google</span>::<span style="color:#4ec9b0">protobuf</span>::<span style="color:#4ec9b0">Message</span><span style="color:#569cd6">*</span> <span style="color:#9cdcfe">poMsg</span><span style="color:#ffd700">)</span>
<span style="color:#ffd700">{</span>
    <span style="color:#c586c0">delete</span> <span style="color:#9cdcfe">poMsg</span>;
<span style="color:#ffd700">}</span>

<span style="color:#569cd6">int</span> <span style="color:#4ec9b0">CDMDispatcher_dmconfig</span>::<span style="color:#dcdcaa">Ondmnode_property</span><span style="color:#ffd700">(</span>::<span style="color:#4ec9b0">google</span>::<span style="color:#4ec9b0">protobuf</span>::<span style="color:#4ec9b0">Message</span><span style="color:#569cd6">&amp;</span> <span style="color:#9cdcfe">msg</span>, <span style="color:#569cd6">int</span> <span style="color:#9cdcfe">nLen</span>, <span style="color:#569cd6">const</span> <span style="color:#569cd6">void*</span> <span style="color:#9cdcfe">pObject</span><span style="color:#ffd700">)</span>
<span style="color:#ffd700">{</span>
    ::<span style="color:#4ec9b0">dmconfig</span>::<span style="color:#4ec9b0">dmnode_property</span><span style="color:#569cd6">*</span> <span style="color:#9cdcfe">poMsg</span> = <span style="color:#c586c0">dynamic_cast</span>&lt;::<span style="color:#4ec9b0">dmconfig</span>::<span style="color:#4ec9b0">dmnode_property</span><span style="color:#569cd6">*</span>&gt;<span style="color:#da70d6">(</span>&amp;<span style="color:#9cdcfe">msg</span><span style="color:#da70d6">)</span>;
    <span style="color:#c586c0">return</span> <span style="color:#b5cea8">0</span>;
<span style="color:#ffd700">}</span>

<span style="color:#569cd6">int</span> <span style="color:#4ec9b0">CDMDispatcher_dmconfig</span>::<span style="color:#dcdcaa">Ondmnode_item</span><span style="color:#ffd700">(</span>::<span style="color:#4ec9b0">google</span>::<span style="color:#4ec9b0">protobuf</span>::<span style="color:#4ec9b0">Message</span><span style="color:#569cd6">&amp;</span> <span style="color:#9cdcfe">msg</span>, <span style="color:#569cd6">int</span> <span style="color:#9cdcfe">nLen</span>, <span style="color:#569cd6">const</span> <span style="color:#569cd6">void*</span> <span style="color:#9cdcfe">pObject</span><span style="color:#ffd700">)</span>
<span style="color:#ffd700">{</span>
    ::<span style="color:#4ec9b0">dmconfig</span>::<span style="color:#4ec9b0">dmnode_item</span><span style="color:#569cd6">*</span> <span style="color:#9cdcfe">poMsg</span> = <span style="color:#c586c0">dynamic_cast</span>&lt;::<span style="color:#4ec9b0">dmconfig</span>::<span style="color:#4ec9b0">dmnode_item</span><span style="color:#569cd6">*</span>&gt;<span style="color:#da70d6">(</span>&amp;<span style="color:#9cdcfe">msg</span><span style="color:#da70d6">)</span>;
    <span style="color:#c586c0">return</span> <span style="color:#b5cea8">0</span>;
<span style="color:#ffd700">}</span>

<span style="color:#569cd6">int</span> <span style="color:#4ec9b0">CDMDispatcher_dmconfig</span>::<span style="color:#dcdcaa">Ondmnode_item2</span><span style="color:#ffd700">(</span>::<span style="color:#4ec9b0">google</span>::<span style="color:#4ec9b0">protobuf</span>::<span style="color:#4ec9b0">Message</span><span style="color:#569cd6">&amp;</span> <span style="color:#9cdcfe">msg</span>, <span style="color:#569cd6">int</span> <span style="color:#9cdcfe">nLen</span>, <span style="color:#569cd6">const</span> <span style="color:#569cd6">void*</span> <span style="color:#9cdcfe">pObject</span><span style="color:#ffd700">)</span>
<span style="color:#ffd700">{</span>
    ::<span style="color:#4ec9b0">dmconfig</span>::<span style="color:#4ec9b0">dmnode_item2</span><span style="color:#569cd6">*</span> <span style="color:#9cdcfe">poMsg</span> = <span style="color:#c586c0">dynamic_cast</span>&lt;::<span style="color:#4ec9b0">dmconfig</span>::<span style="color:#4ec9b0">dmnode_item2</span><span style="color:#569cd6">*</span>&gt;<span style="color:#da70d6">(</span>&amp;<span style="color:#9cdcfe">msg</span><span style="color:#da70d6">)</span>;
    <span style="color:#c586c0">return</span> <span style="color:#b5cea8">0</span>;
<span style="color:#ffd700">}</span></div>
<div style="position:absolute;left:1159px;top:66px;width:112px;height:2px;background:#8a2020;opacity:0.9"></div>
<div style="position:absolute;left:1159px;top:66px;width:25px;height:2px;background:#e8302a"></div>
<div style="position:absolute;left:1145px;top:52px;width:6px;height:1255px;background:linear-gradient(to right,rgba(0,0,0,0),rgba(0,0,0,0.55))"></div>
<div style="position:absolute;left:1267px;top:52px;width:4px;height:1255px;background:linear-gradient(to right,rgba(0,0,0,0),rgba(0,0,0,0.25))"></div>
<div style="position:absolute;left:1271px;top:52px;width:1px;height:1255px;background:#0c0c0c"></div>
<div style="position:absolute;left:1271px;top:52px;width:14px;height:1px;background:#0c0c0c"></div>
<div style="position:absolute;left:1281px;top:110px;width:4px;height:8px;background:#e51400"></div>
<div style="position:absolute;left:0;top:0;width:1285px;height:52px;background:#1f1f1f"></div>
<div style="position:absolute;left:1286px;top:0;width:941px;height:52px;background:#1f1f1f"></div>
<div style="position:absolute;left:0;top:52px;width:1271px;height:5px;background:linear-gradient(to bottom,rgba(0,0,0,0.5),rgba(0,0,0,0))"></div>
<div style="position:absolute;left:0;top:0;width:2227px;height:29px;background:#181818"></div>
<div style="position:absolute;left:0;top:29px;width:2227px;height:1px;background:#2b2b2b"></div>
<div style="position:absolute;left:0;top:0;width:150px;height:30px;background:#1f1f1f"></div>
<div style="position:absolute;left:150px;top:0;width:1px;height:30px;background:#2b2b2b"></div>
<div style="position:absolute;left:1286px;top:0;width:164px;height:30px;background:#1f1f1f"></div>
<div style="position:absolute;left:1450px;top:0;width:1px;height:30px;background:#2b2b2b"></div>
<div style="position:absolute;left:1285px;top:0;width:1px;height:1307px;background:#333333"></div>
<div class="ui" style="left:12.0px;top:3px;color:#f2948e;font-size:13px">dmconfig.msg.cc</div>
<div class="ui" style="left:114.5px;top:3px;color:#f2948e;font-size:12px">2</div>
<div class="ui" style="left:1317.0px;top:3px;color:#f2948e;font-size:13px">dmconfig.msg.h</div>
<div class="ui" style="left:1413.0px;top:3px;color:#f2948e;font-size:12px">4</div>
<svg style="position:absolute;left:132px;top:9px" width="9" height="9"><path d="M0.5 0.5L8.5 8.5M8.5 0.5L0.5 8.5" stroke="#9d9d9d" stroke-width="0.9" fill="none"/></svg>
<svg style="position:absolute;left:1432px;top:9px" width="9" height="9"><path d="M0.6 0.6L8.4 8.4M8.4 0.6L0.6 8.4" stroke="#e8e8e8" stroke-width="1.3" fill="none"/></svg>
<div style="position:absolute;left:1256px;top:12px;width:2px;height:2px;background:#cccccc"></div>
<div style="position:absolute;left:1261px;top:12px;width:2px;height:2px;background:#cccccc"></div>
<div style="position:absolute;left:1266px;top:12px;width:2px;height:2px;background:#cccccc"></div>
<svg style="position:absolute;left:-6px;top:6px" width="14" height="12"><path d="M7.3 3.2 A3.4 3.4 0 1 0 7.3 8.8" stroke="#5fb0c4" stroke-width="2.5" fill="none"/><path d="M6.3 5.6h2.4M7.5 4.4v2.4" stroke="#b4b0d8" stroke-width="1"/><path d="M9.3 5.5h2.4M10.5 4.3v2.4" stroke="#a8c0cc" stroke-width="1"/></svg>
<svg style="position:absolute;left:1300px;top:6px" width="11" height="12"><polygon points="3,1 9,1 9,3.5 4,3.5 4,8.5 9,8.5 9,11 3,11 1,9 1,3" fill="#a074c4"/></svg>
<div class="ui" style="left:-4.3px;top:32px;color:#c8c8c8;font-size:13px">D:</div>
<div class="ui" style="left:23.9px;top:32px;color:#c8c8c8;font-size:13px">home</div>
<div class="ui" style="left:73.3px;top:32px;color:#c8c8c8;font-size:13px">git</div>
<div class="ui" style="left:104.4px;top:32px;color:#c8c8c8;font-size:13px">private_github</div>
<div class="ui" style="left:202.7px;top:32px;color:#c8c8c8;font-size:13px">dmconfig</div>
<div class="ui" style="left:272.7px;top:32px;color:#c8c8c8;font-size:13px">test</div>
<div class="ui" style="left:310.1px;top:32px;color:#c8c8c8;font-size:13px">dmconfigtest</div>
<svg style="position:absolute;left:13px;top:36px" width="7" height="11"><path d="M0.8 0.8L5.5 5.5L0.8 10.2" stroke="#bdbdbd" stroke-width="1" fill="none"/></svg>
<svg style="position:absolute;left:63px;top:36px" width="7" height="11"><path d="M0.8 0.8L5.5 5.5L0.8 10.2" stroke="#bdbdbd" stroke-width="1" fill="none"/></svg>
<svg style="position:absolute;left:93px;top:36px" width="7" height="11"><path d="M0.8 0.8L5.5 5.5L0.8 10.2" stroke="#bdbdbd" stroke-width="1" fill="none"/></svg>
<svg style="position:absolute;left:191px;top:36px" width="7" height="11"><path d="M0.8 0.8L5.5 5.5L0.8 10.2" stroke="#bdbdbd" stroke-width="1" fill="none"/></svg>
<svg style="position:absolute;left:262px;top:36px" width="7" height="11"><path d="M0.8 0.8L5.5 5.5L0.8 10.2" stroke="#bdbdbd" stroke-width="1" fill="none"/></svg>
<svg style="position:absolute;left:300px;top:36px" width="7" height="11"><path d="M0.8 0.8L5.5 5.5L0.8 10.2" stroke="#bdbdbd" stroke-width="1" fill="none"/></svg>
<svg style="position:absolute;left:391px;top:36px" width="7" height="11"><path d="M0.8 0.8L5.5 5.5L0.8 10.2" stroke="#bdbdbd" stroke-width="1" fill="none"/></svg>
<div class="ui" style="left:1300.7px;top:32px;color:#c8c8c8;font-size:13px">D:</div>
<div class="ui" style="left:1328.9px;top:32px;color:#c8c8c8;font-size:13px">home</div>
<div class="ui" style="left:1378.3px;top:32px;color:#c8c8c8;font-size:13px">git</div>
<div class="ui" style="left:1409.4px;top:32px;color:#c8c8c8;font-size:13px">private_github</div>
<div class="ui" style="left:1507.7px;top:32px;color:#c8c8c8;font-size:13px">dmconfig</div>
<div class="ui" style="left:1577.7px;top:32px;color:#c8c8c8;font-size:13px">test</div>
<div class="ui" style="left:1615.1px;top:32px;color:#c8c8c8;font-size:13px">dmconfigtest</div>
<svg style="position:absolute;left:1318px;top:36px" width="7" height="11"><path d="M0.8 0.8L5.5 5.5L0.8 10.2" stroke="#bdbdbd" stroke-width="1" fill="none"/></svg>
<svg style="position:absolute;left:1368px;top:36px" width="7" height="11"><path d="M0.8 0.8L5.5 5.5L0.8 10.2" stroke="#bdbdbd" stroke-width="1" fill="none"/></svg>
<svg style="position:absolute;left:1398px;top:36px" width="7" height="11"><path d="M0.8 0.8L5.5 5.5L0.8 10.2" stroke="#bdbdbd" stroke-width="1" fill="none"/></svg>
<svg style="position:absolute;left:1496px;top:36px" width="7" height="11"><path d="M0.8 0.8L5.5 5.5L0.8 10.2" stroke="#bdbdbd" stroke-width="1" fill="none"/></svg>
<svg style="position:absolute;left:1567px;top:36px" width="7" height="11"><path d="M0.8 0.8L5.5 5.5L0.8 10.2" stroke="#bdbdbd" stroke-width="1" fill="none"/></svg>
<svg style="position:absolute;left:1604px;top:36px" width="7" height="11"><path d="M0.8 0.8L5.5 5.5L0.8 10.2" stroke="#bdbdbd" stroke-width="1" fill="none"/></svg>
<svg style="position:absolute;left:1696px;top:36px" width="7" height="11"><path d="M0.8 0.8L5.5 5.5L0.8 10.2" stroke="#bdbdbd" stroke-width="1" fill="none"/></svg>
<svg style="position:absolute;left:406px;top:35px" width="14" height="12"><path d="M7.3 3.2 A3.4 3.4 0 1 0 7.3 8.8" stroke="#5fb0c4" stroke-width="2.5" fill="none"/><path d="M6.3 5.6h2.4M7.5 4.4v2.4" stroke="#b4b0d8" stroke-width="1"/><path d="M9.3 5.5h2.4M10.5 4.3v2.4" stroke="#a8c0cc" stroke-width="1"/></svg>
<div class="ui" style="left:424.2px;top:32px;color:#c8c8c8;font-size:13px">dmconfig.msg.cc</div>
<svg style="position:absolute;left:526px;top:36px" width="7" height="11"><path d="M0.8 0.8L5.5 5.5L0.8 10.2" stroke="#bdbdbd" stroke-width="1" fill="none"/></svg>
<div class="ui" style="left:537.0px;top:32px;color:#c8c8c8;font-size:13px">...</div>
<svg style="position:absolute;left:1712px;top:36px" width="11" height="12"><polygon points="3,1 9,1 9,3.5 4,3.5 4,8.5 9,8.5 9,11 3,11 1,9 1,3" fill="#a074c4"/></svg>
<div class="ui" style="left:1728.8px;top:32px;color:#c8c8c8;font-size:13px">dmconfig.msg.h</div>
<svg style="position:absolute;left:1827px;top:36px" width="7" height="11"><path d="M0.8 0.8L5.5 5.5L0.8 10.2" stroke="#bdbdbd" stroke-width="1" fill="none"/></svg>
<svg style="position:absolute;left:1838px;top:33px" width="16" height="16"><path d="M4.5 1L8 4.5L4.5 8L1 4.5Z" stroke="#ee9d28" stroke-width="1" fill="none"/><path d="M5.5 7V12.5H10M5.5 7.5H10" stroke="#ee9d28" stroke-width="1" fill="none"/><path d="M13 4.5L15 6.5L13 8.5L11 6.5Z M13 10.5L15 12.5L13 14.5L11 12.5Z" stroke="#ee9d28" stroke-width="1" fill="none"/></svg>
<div class="ui" style="left:1857.0px;top:32px;color:#c8c8c8;font-size:13px">CDMDispatcher_dmconfig</div>
</body></html>
